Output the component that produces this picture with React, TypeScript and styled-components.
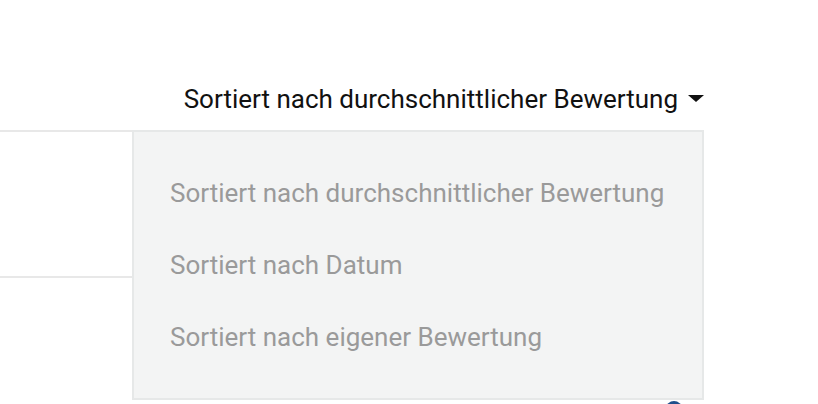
import React from "react";
import styled, { createGlobalStyle } from "styled-components";

const Global = createGlobalStyle`
  html, body { margin: 0; padding: 0; background: #ffffff; }
  body { font-family: Roboto, "Noto Sans", "Liberation Sans", sans-serif; overflow: hidden; }
`;

const Page = styled.div`
  width: 704px;
`;

const Header = styled.div`
  height: 130px;
  box-sizing: border-box;
  padding-top: 84px;
  display: flex;
  justify-content: flex-end;
  align-items: flex-start;
`;

const SortToggle = styled.button`
  display: flex;
  align-items: center;
  gap: 10px;
  background: none;
  border: none;
  padding: 0;
  font-family: inherit;
  font-size: 26px;
  line-height: 30px;
  color: #111111;
  cursor: pointer;
`;

const Caret = styled.span`
  width: 0;
  height: 0;
  border-left: 8px solid transparent;
  border-right: 8px solid transparent;
  border-top: 7px solid #111111;
  margin-top: -2px;
`;

const ListArea = styled.div`
  position: relative;
  border-top: 2px solid #e8e8e8;
`;

const Row = styled.div<{ $height: number }>`
  height: ${(p) => p.$height}px;
  box-sizing: border-box;
  border-bottom: 2px solid #e8e8e8;
  display: flex;
  justify-content: flex-end;
  align-items: flex-start;
  padding-right: 22px;
`;

const Avatar = styled.span`
  width: 16px;
  height: 16px;
  border-radius: 50%;
  background: #1f4f8c;
  margin-top: 123px;
`;

const Menu = styled.ul`
  position: absolute;
  top: -2px;
  left: 132px;
  right: 0;
  height: 270px;
  box-sizing: border-box;
  margin: 0;
  padding: 25px 0 0 0;
  list-style: none;
  background: #f3f4f4;
  border: 2px solid #e6e8e8;
`;

const MenuItem = styled.li`
  padding-left: 36px;
  font-size: 26px;
  line-height: 72px;
  color: #9a9a9a;
  white-space: nowrap;
`;

export default function App() {
  return (
    <>
      <Global />
      <Page>
        <Header>
          <SortToggle>
            Sortiert nach durchschnittlicher Bewertung
            <Caret />
          </SortToggle>
        </Header>
        <ListArea>
          <Row $height={146} />
          <Row $height={128}>
            <Avatar />
          </Row>
          <Menu>
            <MenuItem>Sortiert nach durchschnittlicher Bewertung</MenuItem>
            <MenuItem>Sortiert nach Datum</MenuItem>
            <MenuItem>Sortiert nach eigener Bewertung</MenuItem>
          </Menu>
        </ListArea>
      </Page>
    </>
  );
}
